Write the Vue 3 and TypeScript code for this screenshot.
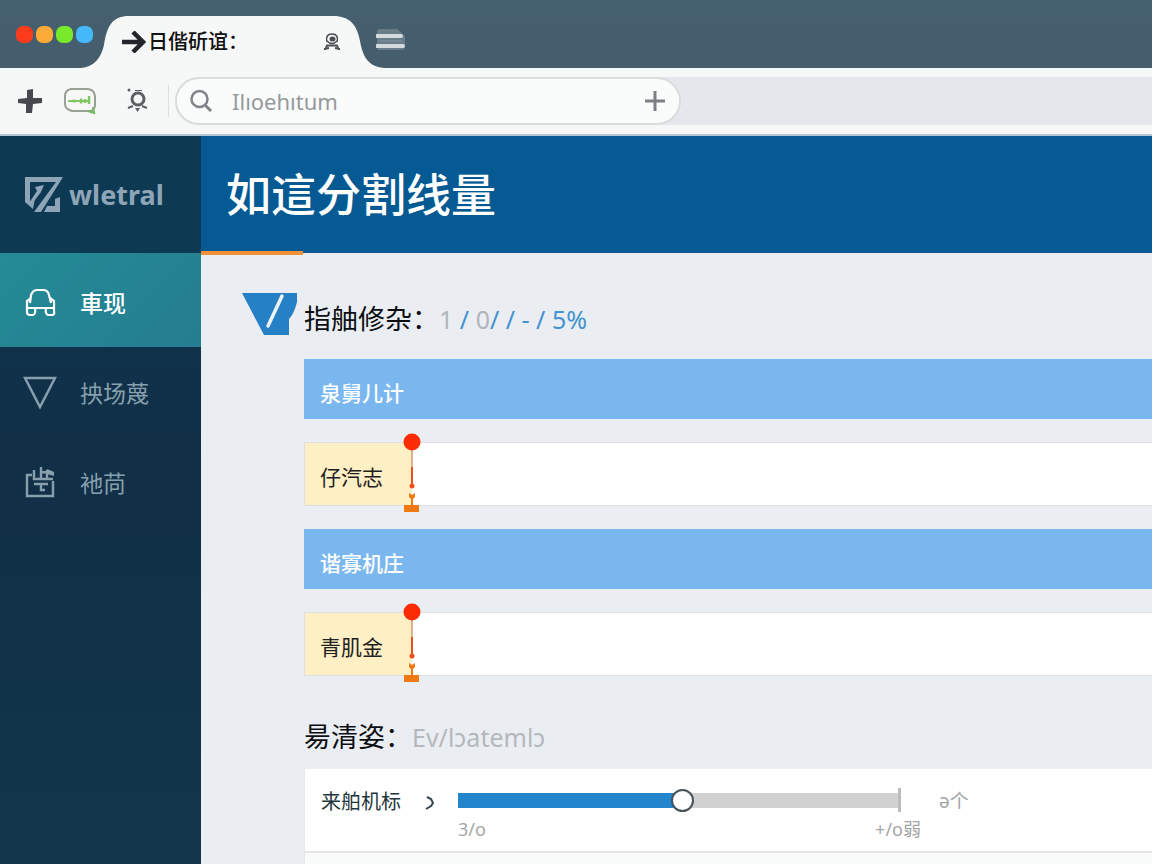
<script setup lang="ts">
import { computed, ref } from 'vue'

interface Row {
  kind: 'band' | 'field'
  label: string
}

const active = ref(0)
const query = ref('')
const level = ref(51)
const fill = computed(() => ({ '--fill': level.value + '%' }))

const dots: string[] = ['red', 'amber', 'green', 'blue']
const rows: Row[] = [
  { kind: 'band', label: '泉舅儿计' },
  { kind: 'field', label: '仔汽志' },
  { kind: 'band', label: '谐寡机庄' },
  { kind: 'field', label: '青肌金' },
]
</script>

<template>
  <div class="window">
    <div class="tabbar">
      <div class="dots">
        <span v-for="d in dots" :key="d" class="dot" :class="d"></span>
      </div>
      <div class="tab">
        <svg class="tab-shape" viewBox="0 0 304 52" aria-hidden="true">
          <path d="M0 52C13 51 20 42 23 29C26 9 32 0 48 0H252C269 0 276 9 279 25C282 42 288 51 304 52Z" fill="#f6f7f7" />
        </svg>
        <svg class="arrow" viewBox="0 0 24 22" fill="none" stroke="#22262a" stroke-width="4.500" aria-hidden="true">
          <path d="M0 11H20M11 1L21 11L11 21" />
        </svg>
        <span class="tab-title">日偕斫谊：</span>
        <svg class="person" viewBox="0 0 18 18" fill="none" stroke="#4a4e52" aria-hidden="true">
          <path d="M4 9Q2 1 9 1Q16 1 14 9" stroke-width="1.500" />
          <ellipse cx="9.500" cy="6" rx="3" ry="2.500" fill="#4a4e52" stroke="none" />
          <path d="M4 8Q9 13 14 8" stroke-width="1.300" />
          <path d="M2 17L4 12.500H14L16 17M1 16L6 15M17 16L12 15" stroke-width="1.800" />
        </svg>
      </div>
      <button class="icon-button tab-menu" type="button" aria-label="Tabs">
        <svg width="30" height="24" viewBox="0 0 30 24" aria-hidden="true">
          <path d="M3 1H21L29 8V19Q29 22 25 22H3Q1 22 1 19V3Z" fill="#8795a1" opacity=".55" />
          <path d="M1 8H25M1 18H27" stroke="#d4dadd" stroke-width="4" stroke-linecap="round" />
          <path d="M3 13H26" stroke="#778792" stroke-width="2" />
        </svg>
      </button>
    </div>

    <div class="toolbar">
      <button class="icon-button" type="button" aria-label="Add">
        <svg width="24" height="24" viewBox="0 0 24 24" aria-hidden="true">
          <path d="M9 1L15 0V9L24 9V14L15 15L14 24H8V15L0 14V10L9 9Z" fill="#46494d" />
        </svg>
      </button>
      <button class="icon-button chat" type="button" aria-label="Messages">
        <svg width="34" height="28" viewBox="0 0 34 28" fill="none" aria-hidden="true">
          <path d="M8 2H25Q32 3 32 10V18Q32 22 28 24H9Q2 22 2 17V9Q2 3 8 2Z" stroke="#96a094" stroke-width="2" />
          <path d="M5 14H27" stroke="#84c563" stroke-width="2" />
          <path d="M11 12.500V15.500M18 11.500V16.500M22 12V16M26 9V17" stroke="#84c563" stroke-width="2.500" />
          <path d="M25 24L31 26L30 20" stroke="#76b95d" stroke-width="2" />
        </svg>
      </button>
      <button class="icon-button" type="button" aria-label="Account">
        <svg width="22" height="26" viewBox="0 0 22 26" fill="none" stroke="#5c6064" aria-hidden="true">
          <circle cx="11" cy="11" r="6" stroke-width="3" />
          <path d="M1 20L6 18M20 20L15 18" stroke-width="2" />
          <path d="M8 20H13L10.500 24Z" fill="#5c6064" stroke="none" />
          <circle cx="2" cy="2" r="1.500" fill="#5c6064" stroke="none" />
          <path d="M8 2.500H15" stroke-width="1" />
        </svg>
      </button>
      <span class="divider"></span>
      <div class="address-area">
        <div class="address">
          <svg width="24" height="24" viewBox="0 0 24 24" fill="none" stroke="#808488" stroke-width="2.500" aria-hidden="true">
            <circle cx="9.500" cy="10" r="8" />
            <path d="M15 16L21 22" stroke-width="3" />
          </svg>
          <input v-model="query" type="text" placeholder="Ilıoehıtum" aria-label="Search" />
          <button class="icon-button" type="button" aria-label="New search">
            <svg width="20" height="20" viewBox="0 0 20 20" stroke="#7b7f83" stroke-width="3" aria-hidden="true">
              <path d="M10 0V20M0 10H20" />
            </svg>
          </button>
        </div>
      </div>
    </div>

    <div class="page">
      <aside class="sidebar">
        <div class="brand">
          <svg width="38" height="36" viewBox="0 0 38 36" fill="#8da5b7" aria-hidden="true">
            <path d="M0 0H38L16 35H9L31 5H5V24L10 21L8 32L0 25Z" />
            <path d="M10 10L19 8L16 15L7 27L6 23L12 14Z" />
            <path d="M19 35L22 29H30V22L35 20V35Z" />
          </svg>
          <span>wletral</span>
        </div>
        <nav>
          <button class="nav-item" :class="{ active: active === 0 }" type="button" @click="active = 0">
            <svg width="32" height="32" viewBox="0 0 32 32" fill="none" stroke="currentColor" stroke-width="2.200" aria-hidden="true">
              <path d="M6 17L7 9Q9 4 13 4H19Q24 4 25 9L27 17M7 12L3 15V26Q3 29 6 29H9Q12 28 11 22H22Q21 28 24 29H28Q31 29 30 25V15L26 12M3 22H30" />
            </svg>
            <span>車现</span>
          </button>
          <button class="nav-item" :class="{ active: active === 1 }" type="button" @click="active = 1">
            <svg width="34" height="34" viewBox="0 0 34 34" fill="none" stroke="currentColor" stroke-width="2.500" aria-hidden="true">
              <path d="M2 3H32L17 32Z" />
            </svg>
            <span>抰场蔑</span>
          </button>
          <button class="nav-item" :class="{ active: active === 2 }" type="button" @click="active = 2">
            <svg width="32" height="32" viewBox="0 0 32 32" fill="none" stroke="currentColor" stroke-width="2.400" aria-hidden="true">
              <path d="M8 9H3V30H29V15M10 4V13H29M17 1V13M17 6L29 7M23 4V13M10 18H24M17 18V24H21" />
              <path d="M23 3L30 6V10L23 8Z" fill="currentColor" stroke="none" />
            </svg>
            <span>衪苘</span>
          </button>
        </nav>
      </aside>

      <main>
        <header class="hero">
          <h1>如這分割线量</h1>
        </header>
        <div class="content">
          <svg class="mark" width="56" height="44" viewBox="0 0 56 44" aria-hidden="true">
            <path d="M0 1H55V10Q52 22 47 27V43H22Z" fill="#2580c5" />
            <path d="M40 4L26 34" stroke="#eef3f8" stroke-width="3.500" stroke-linecap="round" />
          </svg>
          <div class="body">
            <h2>指舳修杂：
              <span class="meta"><i>1</i> / <i>0</i>/ / - / 5%</span>
            </h2>
            <div class="rows">
              <template v-for="row in rows" :key="row.label">
                <div v-if="row.kind === 'band'" class="band">{{ row.label }}</div>
                <div v-else class="field">
                  <div class="tag">
                    <span>{{ row.label }}</span>
                    <svg class="pin" width="18" height="80" viewBox="0 0 18 80" aria-hidden="true">
                      <path d="M9 10V36" stroke="#b96a35" />
                      <path d="M9 34V54" stroke="#e8501e" stroke-width="2" />
                      <circle cx="9" cy="9" r="8.500" fill="#fb2c05" />
                      <circle cx="9" cy="53" r="2.500" fill="#f0501c" />
                      <path d="M6 60L9 62L12 60V64L10 66V72H16V79H1V72H8V66L6 64Z" fill="#f07a12" />
                    </svg>
                  </div>
                  <input type="text" :aria-label="row.label" />
                </div>
              </template>
            </div>
            <h2 class="second">昜清姿：
              <span class="hint">Ev/lɔatemlɔ</span>
            </h2>
            <section class="panel">
              <div class="setting">
                <label for="level">来舶机标</label>
                <svg class="chevron" width="10" height="14" viewBox="0 0 10 14" fill="none" stroke="#34474e" stroke-width="2" aria-hidden="true">
                  <path d="M2 1L6 3L8 7L6 10L1 13" />
                </svg>
                <div class="slider">
                  <div class="track">
                    <input id="level" v-model.number="level" type="range" min="0" max="100" :style="fill" />
                    <span class="stop"></span>
                  </div>
                  <div class="scale"><span>3/o</span><span class="max">+/o弱</span></div>
                </div>
                <span class="unit">ə个</span>
              </div>
            </section>
          </div>
        </div>
      </main>
    </div>
  </div>
</template>

<style>
body {
  margin: 0;
}
</style>

<style scoped>
* {
  box-sizing: border-box;
}
.window {
  display: flex;
  flex-direction: column;
  min-height: 100vh;
  overflow: hidden;
  font-family: "Noto Sans", "Noto Sans CJK SC", sans-serif;
  background: #eaeef3;
}
button {
  font: inherit;
  border: 0;
  padding: 0;
  background: none;
  cursor: pointer;
}
svg {
  display: block;
  flex: none;
}
.icon-button {
  flex: none;
}
.tabbar {
  display: flex;
  height: 68px;
  padding-left: 16px;
  background: linear-gradient(180deg, #45606f, #455d6c);
}
.dots {
  display: flex;
  gap: 3px;
  width: 65px;
  padding-top: 26px;
}
.dot {
  flex: none;
  width: 17px;
  height: 17px;
  border-radius: 7px;
}
.red { background: #fd3c1c; }
.amber { background: #fdaa38; }
.green { background: #79e92b; }
.blue { background: #45b8fc; }
.tab {
  position: relative;
  display: flex;
  align-items: center;
  width: 304px;
  height: 52px;
  margin-top: 16px;
  padding: 0 44px 0 41px;
}
.tab-shape {
  position: absolute;
  inset: 0;
  width: 100%;
  height: 100%;
}
.arrow {
  position: relative;
  width: 24px;
  height: 22px;
}
.tab-title {
  position: relative;
  flex: 1;
  margin-left: 2px;
  font-size: 20px;
  line-height: 28px;
  font-weight: 500;
  white-space: nowrap;
  color: #111;
}
.person {
  position: relative;
  width: 18px;
  height: 18px;
}
.tab-menu {
  margin: 11px 0 0 -9px;
}
.toolbar {
  display: flex;
  align-items: center;
  height: 68px;
  padding-left: 18px;
  background: #f6f7f7;
  border-bottom: 2px solid #b4c5d6;
}
.chat {
  margin: 0 30px 0 21px;
}
.divider {
  width: 1px;
  height: 32px;
  margin: 0 6px 0 19px;
  background: #dddfe1;
}
.address-area {
  flex: 1;
  border-radius: 24px 0 0 24px;
  background: #e4e8ec;
}
.address {
  display: flex;
  align-items: center;
  width: 506px;
  height: 48px;
  padding: 0 14px 0 13px;
  border: 2px solid #d9dcdd;
  border-radius: 24px;
  background: #fafbfb;
}
.address input {
  flex: 1;
  min-width: 0;
  height: 40px;
  padding: 0 18px;
  border: 0;
  outline: 0;
  background: none;
  font-family: inherit;
  font-size: 22px;
  color: #5f6468;
}
.address input::placeholder {
  color: #96999c;
}
.page {
  flex: 1;
  display: grid;
  grid-template-columns: 201px 1fr;
}
.sidebar {
  background: linear-gradient(180deg, #0e3651, #112f47 45%, #11364a);
}
.brand {
  display: flex;
  align-items: center;
  gap: 6px;
  height: 117px;
  padding-left: 25px;
  background: #0e3953;
  color: #8da5b7;
  font-size: 27px;
  font-weight: 700;
}
.nav-item {
  display: flex;
  align-items: center;
  width: 100%;
  height: 90px;
  padding-left: 23px;
  color: #88a0ad;
  font-size: 23px;
}
.nav-item:first-child {
  height: 94px;
  padding-top: 4px;
}
.nav-item svg {
  width: 34px;
}
.nav-item span {
  margin-left: 23px;
}
.nav-item.active {
  background: linear-gradient(135deg, #258b96, #247d90);
  color: #fff;
  font-weight: 500;
}
main {
  display: flex;
  flex-direction: column;
  min-width: 0;
}
.hero {
  position: relative;
  display: flex;
  align-items: center;
  height: 117px;
  padding-left: 25px;
  background: #065a94;
}
.hero::after {
  content: "";
  position: absolute;
  left: 0;
  bottom: -2px;
  width: 102px;
  height: 4px;
  background: #f0913a;
}
h1 {
  margin: 0;
  font-size: 45px;
  line-height: 60px;
  font-weight: 500;
  color: #fff;
}
.content {
  flex: 1;
  display: grid;
  grid-template-columns: 62px 1fr;
  padding: 39px 0 0 41px;
}
.body {
  display: flex;
  flex-direction: column;
  min-width: 0;
}
h2 {
  display: flex;
  align-items: center;
  height: 54px;
  margin: 0;
  font-size: 27px;
  line-height: 36px;
  font-weight: 400;
  white-space: nowrap;
  color: #0c0f12;
}
.meta {
  font-size: 25px;
  color: #4292cf;
}
.meta i {
  font-style: normal;
  color: #b0b5bb;
}
.rows {
  display: grid;
  gap: 23px;
  padding-top: 13px;
}
.band {
  display: flex;
  align-items: center;
  height: 60px;
  padding: 6px 0 0 16px;
  background: #7ab7ef;
  color: #fff;
  font-size: 21px;
  font-weight: 500;
}
.field {
  display: flex;
  height: 64px;
  border: 1px solid #dedfe0;
  border-right: 0;
  background: #fff;
}
.field input {
  flex: 1;
  min-width: 0;
  padding: 0 16px;
  border: 0;
  outline: 0;
  background: none;
  font: inherit;
}
.tag {
  position: relative;
  display: flex;
  align-items: center;
  width: 107px;
  padding: 4px 0 0 15px;
  background: #feefc4;
  color: #1d211f;
  font-size: 21px;
}
.pin {
  position: absolute;
  top: -10px;
  right: -9px;
}
.second {
  height: 93px;
  padding-top: 28px;
}
.hint {
  font-size: 25px;
  color: #b4b8bc;
}
.panel {
  flex: 1;
  background: #f9fafa;
  border-left: 1px solid #e6e8ea;
}
.setting {
  display: flex;
  height: 84px;
  padding: 16px 0 0 16px;
  border-bottom: 2px solid #e3e5e7;
  background: #fff;
}
.setting label {
  width: 104px;
  font-size: 20px;
  line-height: 34px;
  color: #1e363b;
}
.chevron {
  margin-top: 11px;
}
.slider {
  width: 443px;
  margin-left: 23px;
}
.track {
  display: flex;
  align-items: center;
  height: 30px;
}
.track input {
  flex: 1;
  min-width: 0;
  height: 24px;
  margin: 0;
  appearance: none;
  background: none;
}
.track input::-webkit-slider-runnable-track {
  height: 15px;
  background: linear-gradient(90deg, #2385cc var(--fill), #d1d1d1 var(--fill));
}
.track input::-webkit-slider-thumb {
  appearance: none;
  width: 23px;
  height: 23px;
  margin-top: -4px;
  border: 2px solid #46525a;
  border-radius: 50%;
  background: #fff;
}
.stop {
  width: 3px;
  height: 24px;
  background: #bcbcbc;
}
.scale {
  display: flex;
  justify-content: space-between;
  font-size: 18px;
  line-height: 28px;
  color: #a4a6a8;
}
.max {
  margin-right: -20px;
}
.unit {
  margin-left: 38px;
  font-size: 19px;
  line-height: 32px;
  color: #a4a6a8;
}
</style>
